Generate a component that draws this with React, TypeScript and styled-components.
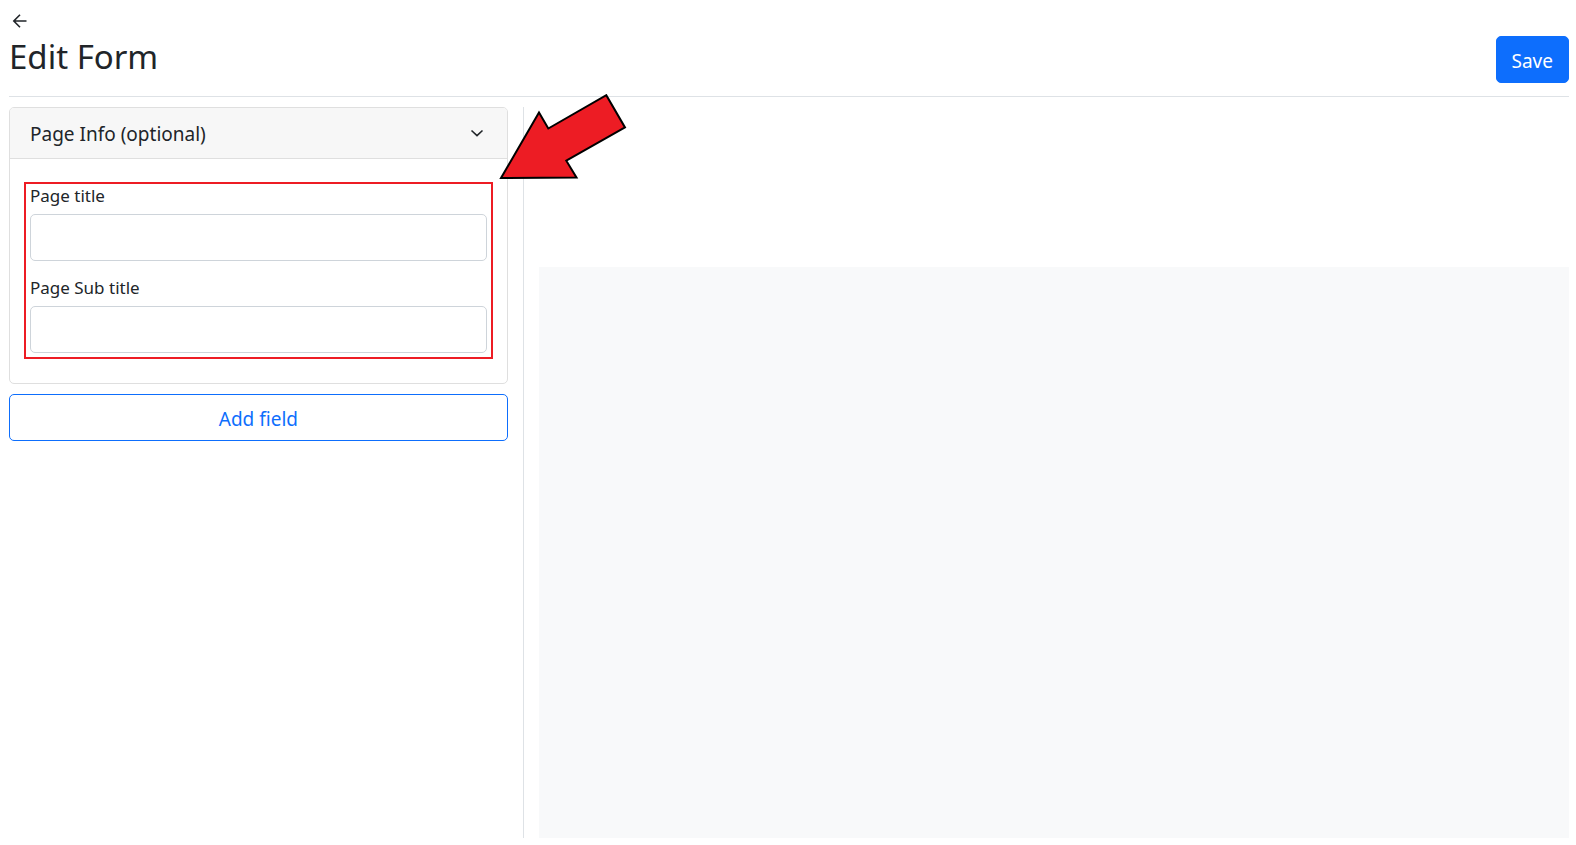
import React from 'react';
import styled, { createGlobalStyle } from 'styled-components';

const GlobalStyle = createGlobalStyle`
  *, *::before, *::after { box-sizing: border-box; }
  body {
    margin: 0;
    background: #fff;
    color: #212529;
    font-family: "Segoe UI", "Noto Sans", "Open Sans", sans-serif;
    font-size: 19px;
    line-height: 29px;
  }
  button, input { font: inherit; }
`;

const Page = styled.div`
  display: flex;
  flex-direction: column;
  min-height: 100vh;
  padding: 12px 7px 7px 9px;
`;

const BackLink = styled.a`
  display: flex;
  align-self: flex-start;
  color: inherit;
`;

const Header = styled.header`
  display: flex;
  justify-content: space-between;
  align-items: flex-start;
  padding: 6px 0 13px;
  border-bottom: 1px solid #dee2e6;
`;

const Title = styled.h1`
  margin: 0;
  font-size: 33px;
  font-weight: 400;
  line-height: 42px;
`;

const Button = styled.button<{ $outline?: boolean }>`
  height: 47px;
  padding: 3px 15px 0;
  border: 1px solid #0d6efd;
  border-radius: 5px;
  background: ${(p) => (p.$outline ? '#fff' : '#0d6efd')};
  color: ${(p) => (p.$outline ? '#0d6efd' : '#fff')};
  cursor: pointer;
`;

const Main = styled.main`
  display: flex;
  flex: 1;
  margin-top: 10px;
`;

const Sidebar = styled.section`
  display: flex;
  flex: 0 0 33%;
  flex-direction: column;
  gap: 10px;
  padding-right: 15px;
  border-right: 1px solid #dee2e6;
`;

const Card = styled.div`
  border: 1px solid #dfdfdf;
  border-radius: 5px;
`;

const CardToggle = styled.button`
  display: flex;
  justify-content: space-between;
  align-items: center;
  width: 100%;
  height: 51px;
  padding: 3px 20px 0;
  border: 0;
  border-bottom: 1px solid #dfdfdf;
  border-radius: 4px 4px 0 0;
  background: #f7f7f7;
  color: inherit;
  text-align: left;
  cursor: pointer;
`;

const CardBody = styled.div`
  padding: 23px 14px 24px;
`;

const Highlight = styled.div`
  position: relative;
  display: flex;
  flex-direction: column;
  gap: 15px;
  padding: 0 4px 4px;
  border: 2px solid #ed1c24;
`;

const Field = styled.div`
  display: flex;
  flex-direction: column;
  gap: 6px;
`;

const Label = styled.label`
  font-size: 17px;
  line-height: 24px;
`;

const Input = styled.input`
  width: 100%;
  height: 47px;
  padding: 0 15px;
  border: 1px solid #ced4da;
  border-radius: 5px;
  background: #fff;
  color: inherit;
`;

const Pointer = styled.svg`
  position: absolute;
  left: 100%;
  bottom: 100%;
  margin: 0 0 2px 8px;
`;

const Preview = styled.section`
  display: flex;
  flex: 1;
  padding: 160px 0 0 15px;
`;

const PreviewCanvas = styled.div`
  flex: 1;
  background: #f8f9fa;
`;

export default function App() {
  return (
    <>
      <GlobalStyle />
      <Page>
        <BackLink href="#" aria-label="Back">
          <svg width="20" height="18" viewBox="0 0 20 18" fill="none" stroke="currentColor" strokeWidth="1.6">
            <path d="M17.5 9H4.8M11 2.7 4.8 9l6.2 6.3" />
          </svg>
        </BackLink>
        <Header>
          <Title>Edit Form</Title>
          <Button type="button">Save</Button>
        </Header>
        <Main>
          <Sidebar>
            <Card>
              <CardToggle type="button" aria-expanded="true">
                Page Info (optional)
                <svg width="20" height="20" viewBox="0 0 20 20" fill="none" stroke="currentColor" strokeWidth="1.6">
                  <path d="M4.5 5.500 10 10.700l5.500-5.200" />
                </svg>
              </CardToggle>
              <CardBody>
                <Highlight>
                  <Field>
                    <Label htmlFor="page-title">Page title</Label>
                    <Input id="page-title" type="text" />
                  </Field>
                  <Field>
                    <Label htmlFor="page-subtitle">Page Sub title</Label>
                    <Input id="page-subtitle" type="text" />
                  </Field>
                  <Pointer width="128" height="88" viewBox="0 0 128 88" aria-hidden="true">
                    <path
                      d="M2 84 40 18.5 49.3 34.5 107.3 1.2 126 33.4 67.3 66.7 77.5 83.6Z"
                      fill="#ed1c24"
                      stroke="#000"
                      strokeWidth="2"
                    />
                  </Pointer>
                </Highlight>
              </CardBody>
            </Card>
            <Button type="button" $outline>
              Add field
            </Button>
          </Sidebar>
          <Preview aria-label="Form preview">
            <PreviewCanvas />
          </Preview>
        </Main>
      </Page>
    </>
  );
}
